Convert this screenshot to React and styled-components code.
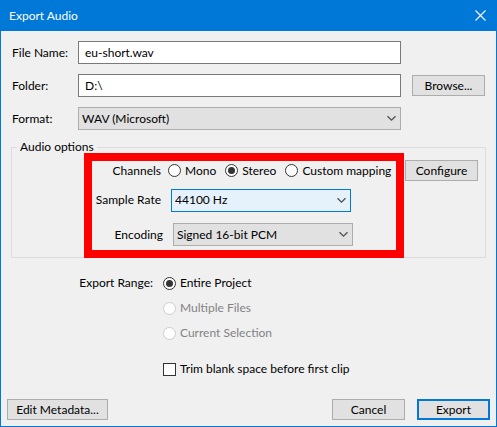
import React, { useState } from "react";
import styled, { createGlobalStyle } from "styled-components";

const GlobalStyle = createGlobalStyle`
  *, *::before, *::after { box-sizing: border-box; }
  body {
    margin: 0;
    background: #f0f0f0;
    color: #000;
    font: 12px/16px Lato, "Open Sans", sans-serif;
  }
  button, input, select { font: inherit; color: inherit; margin: 0; }
`;

const Dialog = styled.main`
  display: flex;
  flex-direction: column;
  min-height: 100vh;
  background: #f0f0f0;
  border: 1px solid #0078d7;
  border-top: 0;
`;

const TitleBar = styled.header`
  display: flex;
  align-items: center;
  justify-content: space-between;
  height: 31px;
  padding-left: 8px;
  background: #0078d7;
  color: #fff;
`;

const Title = styled.h1`
  margin: 0;
  font-size: 12px;
  font-weight: 400;
`;

const CloseButton = styled.button`
  display: grid;
  place-items: center;
  width: 31px;
  height: 31px;
  padding: 0;
  border: 0;
  background: none;
  color: #fff;
`;

const FileForm = styled.section`
  display: grid;
  grid-template-columns: 66px 1fr 73px;
  row-gap: 10px;
  align-items: center;
  padding: 10px 11px 0;
`;

const FieldLabel = styled.label`
  white-space: nowrap;
`;

const TextField = styled.input`
  width: 100%;
  height: 23px;
  padding: 0 6px;
  border: 1px solid #7a7a7a;
  border-radius: 0;
  background: #fff;
  outline: none;
`;

const SelectFrame = styled.div`
  display: grid;
  align-items: center;
  width: ${(p) => p.$width || "100%"};
  & > * { grid-area: 1 / 1; }
  & > svg { justify-self: end; margin-right: 4px; pointer-events: none; }
`;

const SelectField = styled.select`
  appearance: none;
  width: 100%;
  height: 23px;
  padding: 0 20px 0 3px;
  border: 1px solid ${(p) => (p.$active ? "#0078d7" : "#adadad")};
  border-radius: 0;
  background: ${(p) => (p.$active ? "#e5f1fb" : "#e1e1e1")};
  outline: none;
`;

const PushButton = styled.button`
  min-width: 73px;
  height: 21px;
  padding: 0 8px;
  border: ${(p) => (p.$primary ? "2px solid #0078d7" : "1px solid #adadad")};
  background: #e1e1e1;
  line-height: 16px;
  white-space: nowrap;
`;

const BrowseButton = styled(PushButton)`
  grid-column: 3;
`;

const FileControl = styled.div`
  display: flex;
  margin-right: 11px;
`;

const OptionsGroup = styled.fieldset`
  display: flex;
  align-items: flex-start;
  min-width: 0;
  margin: 9px 10px 0;
  padding: 0 7px 0 72px;
  border: 1px solid #dcdcdc;
`;

const OptionsLegend = styled.legend`
  margin-left: -67px;
  padding: 0 3px;
`;

const Highlight = styled.div`
  flex: 1;
  margin: -2px 0 -1px;
  padding-bottom: 1px;
  border: 8px solid #f00;
`;

const OptionRow = styled.div`
  display: flex;
  align-items: center;
  gap: ${(p) => p.$gap || "10px"};
  height: ${(p) => p.$height};
`;

const OptionLabel = styled.label`
  width: ${(p) => p.$width || "69px"};
  text-align: right;
  white-space: nowrap;
`;

const ConfigureButton = styled(PushButton)`
  margin: 5px 0 0 1px;
`;

const ChannelChoices = styled.div`
  display: flex;
  gap: 9px;
`;

const Choice = styled.label`
  display: flex;
  align-items: center;
  gap: 4px;
  white-space: nowrap;
  color: ${(p) => (p.$disabled ? "#838383" : "#000")};
`;

const Radio = styled.input.attrs({ type: "radio" })`
  appearance: none;
  display: grid;
  place-items: center;
  width: 13px;
  height: 13px;
  border: 1px solid #333;
  border-radius: 50%;
  background: #fff;
  &:checked::before {
    content: "";
    width: 7px;
    height: 7px;
    border-radius: 50%;
    background: #333;
  }
  &:disabled { border-color: #ccc; }
`;

const Checkbox = styled.input.attrs({ type: "checkbox" })`
  appearance: none;
  display: grid;
  place-items: center;
  width: 13px;
  height: 13px;
  border: 1px solid #333;
  background: #fff;
  &:checked::before {
    content: "";
    width: 7px;
    height: 7px;
    background: #333;
  }
`;

const RangeSection = styled.section`
  display: grid;
  grid-template-columns: 152px 1fr;
  column-gap: 10px;
  padding-top: 17px;
`;

const RangeLabel = styled.span`
  text-align: right;
`;

const RangeChoices = styled.div`
  display: flex;
  flex-direction: column;
  align-items: flex-start;
  gap: 9px;
`;

const TrimRow = styled.div`
  display: flex;
  grid-column: 2;
  padding-top: 20px;
`;

const Footer = styled.footer`
  display: flex;
  gap: 12px;
  margin-top: auto;
  padding: 0 6px 6px;
`;

const MetadataButton = styled(PushButton)`
  min-width: 101px;
  margin-right: auto;
`;

const Chevron = () => (
  <svg width="11" height="7" viewBox="0 0 11 7" fill="none" stroke="#505050" strokeWidth="1.3" aria-hidden="true">
    <path d="M1.5 1.2 5.5 5.2 9.5 1.2" />
  </svg>
);

const CloseIcon = () => (
  <svg width="11" height="11" viewBox="0 0 11 11" fill="none" stroke="currentColor" strokeWidth="1.1" aria-hidden="true">
    <path d="M.5.5 10.5 10.5M10.5.5.5 10.5" />
  </svg>
);

function Dropdown({ id, width, active, children }) {
  return (
    <SelectFrame $width={width}>
      <SelectField id={id} $active={active}>
        <option>{children}</option>
      </SelectField>
      <Chevron />
    </SelectFrame>
  );
}

export default function App() {
  const [channels, setChannels] = useState("Stereo");
  return (
    <>
      <GlobalStyle />
      <Dialog>
        <TitleBar>
          <Title>Export Audio</Title>
          <CloseButton aria-label="Close"><CloseIcon /></CloseButton>
        </TitleBar>

        <FileForm>
          <FieldLabel htmlFor="name">File Name:</FieldLabel>
          <FileControl><TextField id="name" defaultValue="eu-short.wav" /></FileControl>
          <span />
          <FieldLabel htmlFor="folder">Folder:</FieldLabel>
          <FileControl><TextField id="folder" defaultValue="D:\" /></FileControl>
          <BrowseButton>Browse...</BrowseButton>
          <FieldLabel htmlFor="format">Format:</FieldLabel>
          <FileControl><Dropdown id="format">WAV (Microsoft)</Dropdown></FileControl>
        </FileForm>

        <OptionsGroup>
          <OptionsLegend>Audio options</OptionsLegend>
          <Highlight>
            <OptionRow $height="19px" $gap="7px" role="radiogroup" aria-labelledby="channels">
              <OptionLabel as="span" id="channels">Channels</OptionLabel>
              <ChannelChoices>
                {["Mono", "Stereo", "Custom mapping"].map((name) => (
                  <Choice key={name}>
                    <Radio name="channels" checked={channels === name} onChange={() => setChannels(name)} />
                    {name}
                  </Choice>
                ))}
              </ChannelChoices>
            </OptionRow>
            <OptionRow $height="40px">
              <OptionLabel htmlFor="rate">Sample Rate</OptionLabel>
              <Dropdown id="rate" width="180px" active>44100 Hz</Dropdown>
            </OptionRow>
            <OptionRow $height="29px">
              <OptionLabel htmlFor="encoding" $width="71px">Encoding</OptionLabel>
              <Dropdown id="encoding" width="180px">Signed 16-bit PCM</Dropdown>
            </OptionRow>
          </Highlight>
          <ConfigureButton>Configure</ConfigureButton>
        </OptionsGroup>

        <RangeSection>
          <RangeLabel id="range">Export Range:</RangeLabel>
          <RangeChoices role="radiogroup" aria-labelledby="range">
            <Choice><Radio name="range" defaultChecked />Entire Project</Choice>
            <Choice $disabled><Radio name="range" disabled />Multiple Files</Choice>
            <Choice $disabled><Radio name="range" disabled />Current Selection</Choice>
          </RangeChoices>
          <TrimRow>
            <Choice><Checkbox />Trim blank space before first clip</Choice>
          </TrimRow>
        </RangeSection>

        <Footer>
          <MetadataButton>Edit Metadata...</MetadataButton>
          <PushButton>Cancel</PushButton>
          <PushButton $primary>Export</PushButton>
        </Footer>
      </Dialog>
    </>
  );
}
